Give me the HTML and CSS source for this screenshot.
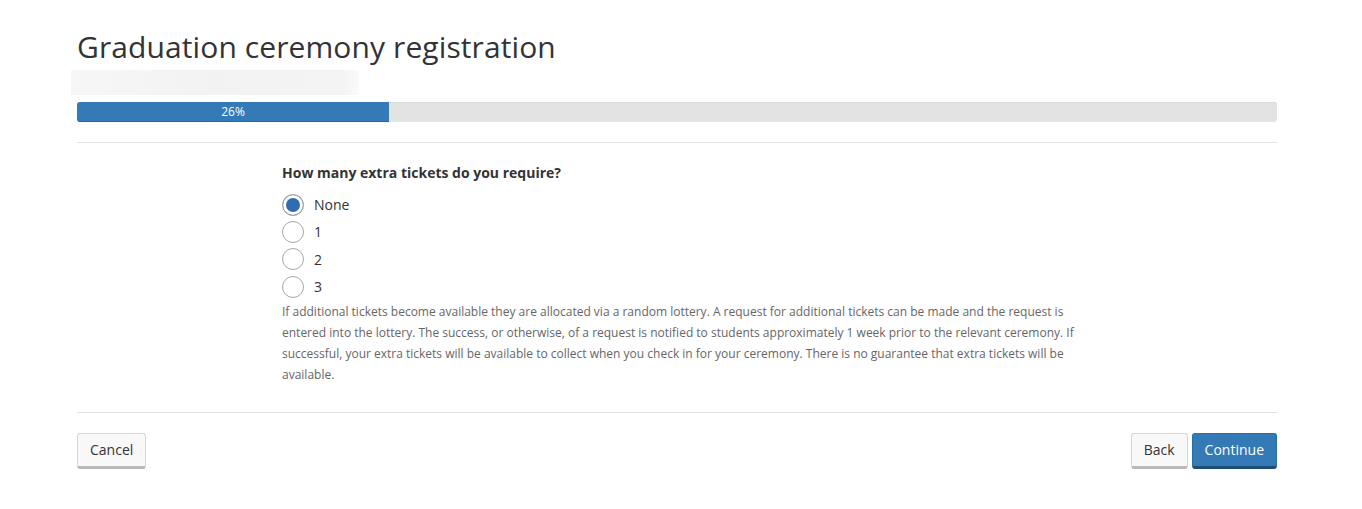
FILE: index.html
```html
<!DOCTYPE html>
<html lang="en">
<head>
<meta charset="utf-8">
<title>Graduation ceremony registration</title>
<link rel="stylesheet" href="styles.css">
</head>
<body>
<div class="container">
  <h1 class="title">Graduation ceremony registration</h1>
  <div class="subtitle-blur"></div>
  <div class="progress">
    <div class="progress-bar" style="width:26%">26%</div>
  </div>
  <hr class="rule">
  <div class="form-body">
    <div class="question">How many extra tickets do you require?</div>
    <ul class="options">
      <li class="option"><span class="radio checked"></span><span class="label">None</span></li>
      <li class="option"><span class="radio"></span><span class="label">1</span></li>
      <li class="option"><span class="radio"></span><span class="label">2</span></li>
      <li class="option"><span class="radio"></span><span class="label">3</span></li>
    </ul>
    <p class="help">If additional tickets become available they are allocated via a random lottery. A request for additional tickets can be made and the request is entered into the lottery. The success, or otherwise, of a request is notified to students approximately 1 week prior to the relevant ceremony. If successful, your extra tickets will be available to collect when you check in for your ceremony. There is no guarantee that extra tickets will be available.</p>
  </div>
  <hr class="rule rule-bottom">
  <div class="actions">
    <button class="btn">Cancel</button>
    <div class="actions-right">
      <button class="btn">Back</button>
      <button class="btn btn-primary">Continue</button>
    </div>
  </div>
</div>
</body>
</html>
```

FILE: styles.css
```css
* { box-sizing: border-box; }
html, body { margin: 0; padding: 0; background: #fff; }
body {
  font-family: "Open Sans", "Liberation Sans", sans-serif;
  color: #333;
  font-size: 14px;
}
.container {
  width: 1200px;
  margin: 0 0 0 77px;
  padding-top: 27px;
}
.title {
  margin: 0;
  font-weight: 400;
  font-size: 30px;
  line-height: 40px;
  color: #333;
  letter-spacing: 0.1px;
}
.subtitle-blur {
  margin-top: 3px;
  margin-left: -6px;
  width: 288px;
  height: 25px;
  background: linear-gradient(90deg, #f7f7f7, #f2f2f2 50%, #f4f4f4 95%, #fbfbfb);
}
.progress {
  margin-top: 7px;
  height: 20px;
  background: #e3e3e3;
  border-radius: 3px;
  overflow: hidden;
  box-shadow: inset 0 1px 1px rgba(0,0,0,0.05);
}
.progress-bar {
  height: 100%;
  background: #337ab7;
  color: #fff;
  font-size: 12px;
  line-height: 20px;
  text-align: center;
  box-shadow: inset 0 -1px 0 rgba(0,0,0,0.15);
}
.rule {
  border: 0;
  border-top: 1px solid #e2e2e2;
  margin: 20px 0 0;
}
.form-body {
  padding-left: 205px;
  padding-top: 20px;
  width: 1050px;
}
.question {
  font-weight: 700;
  font-size: 14px;
  line-height: 20px;
  color: #333;
}
.options {
  list-style: none;
  margin: 8px 0 0;
  padding: 0;
}
.option {
  display: flex;
  align-items: center;
  height: 27.3px;
}
.radio {
  width: 22px;
  height: 22px;
  border-radius: 50%;
  border: 1px solid #a8a8a8;
  background: #fff;
  flex: none;
}
.radio.checked {
  background: #2e6db0;
  box-shadow: inset 0 0 0 3px #fff;
}
.label {
  margin-left: 10px;
  font-size: 14px;
  color: #333;
}
.help {
  margin: 1px 0 0;
  font-size: 12px;
  line-height: 21px;
  color: #666;
  width: 812px;
}
.rule-bottom { margin-top: 27px; }
.actions {
  display: flex;
  justify-content: space-between;
  margin-top: 20px;
}
.actions-right { display: flex; gap: 4px; }
.btn {
  font-family: "Open Sans", "Liberation Sans", sans-serif;
  font-size: 14px;
  color: #333;
  height: 36px;
  padding: 0 12px 2px;
  background: #f8f8f8;
  border: 1px solid #d6d6d6;
  border-bottom: 3px solid #b9b9b9;
  border-radius: 3px;
  cursor: pointer;
}
.btn-primary {
  background: #337ab7;
  border-color: #2e6da4;
  border-bottom-color: #1f4c75;
  color: #fff;
}
```
